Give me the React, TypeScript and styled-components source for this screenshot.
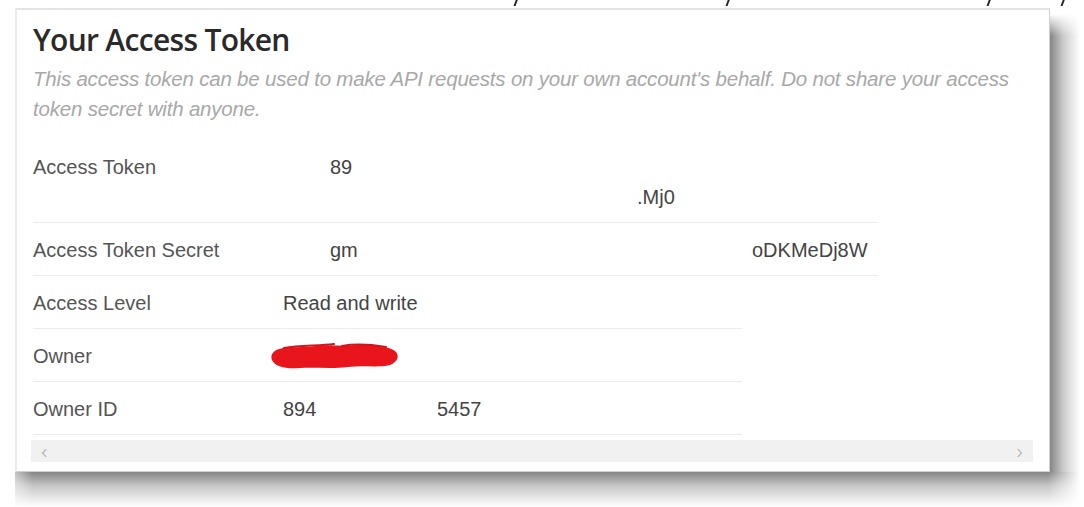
import { createGlobalStyle, styled } from 'styled-components'

type Row = {
  label: string
  values: { text?: string; at: number; redacted?: boolean }[][]
}

const firstRows: Row[] = [
  {
    label: 'Access Token',
    values: [[{ text: '89', at: 0 }], [{ text: '.Mj0', at: 307 }]],
  },
  {
    label: 'Access Token Secret',
    values: [[{ text: 'gm', at: 0 }, { text: 'oDKMeDj8W', at: 422 }]],
  },
]

const secondRows: Row[] = [
  { label: 'Access Level', values: [[{ text: 'Read and write', at: 0 }]] },
  { label: 'Owner', values: [[{ at: -13, redacted: true }]] },
  {
    label: 'Owner ID',
    values: [[{ text: '894', at: 0 }, { text: '5457', at: 154 }]],
  },
]

// descenders of the caption that sits above the cropped area
const ticks = [515, 727, 988, 1062]

const Redaction = () => (
  <svg width="130" height="27" viewBox="0 0 130 27">
    <path
      d="M9 6 C20 3 34 5 46 3 C60 1 72 4 86 2 C102 1 118 3 125 8 C130 12 128 19 120 22 C108 25 92 22 78 24 C62 26 44 24 30 25 C16 26 5 24 2 17 C0 12 3 8 9 6 Z"
      fill="#e8161c"
    />
    <path
      d="M14 5 C30 2 48 3 64 1 M72 3 C88 0 104 2 116 4"
      stroke="#d4141a"
      strokeWidth="2"
      strokeLinecap="round"
      fill="none"
    />
  </svg>
)

const App = () => {
  const renderRows = (rows: Row[]) =>
    rows.map((row) => (
      <TableRow key={row.label}>
        <Label>{row.label}</Label>
        <Value>
          {row.values.map((line, i) => (
            <ValueLine key={i}>
              {line.map((part, j) => (
                <Part key={j} $at={part.at}>
                  {part.redacted ? <Redaction /> : part.text}
                </Part>
              ))}
            </ValueLine>
          ))}
        </Value>
      </TableRow>
    ))

  return (
    <>
      <GlobalStyle />
      <TopStrip>
        {ticks.map((x) => (
          <Tick key={x} style={{ left: x }} />
        ))}
      </TopStrip>
      <CardFrame>
        <Card>
          <Title>Your Access Token</Title>
          <Description>
            This access token can be used to make API requests on your own account's behalf. Do not
            share your access token secret with anyone.
          </Description>
          <Table $width={845} $labelWidth={297}>
            {renderRows(firstRows)}
          </Table>
          <Table $width={709} $labelWidth={250}>
            {renderRows(secondRows)}
          </Table>
          <ScrollBar>
            <Arrow>‹</Arrow>
            <Arrow>›</Arrow>
          </ScrollBar>
        </Card>
      </CardFrame>
    </>
  )
}

const GlobalStyle = createGlobalStyle`
  body {
    margin: 0;
    background: #ffffff;
    font-family: "Liberation Sans", Arial, sans-serif;
  }
`

const TopStrip = styled.div`
  position: relative;
  height: 8px;
  overflow: hidden;
`

const Tick = styled.span`
  position: absolute;
  top: -2px;
  width: 2px;
  height: 8px;
  background: #222;
  transform: skewX(-20deg);
`

/* the screenshot tool's drop shadow, painted as two fading strips */
const CardFrame = styled.div`
  position: relative;
  margin-left: 15px;
  width: 1035px;
  padding: 0 32px 35px 0;

  &::before,
  &::after {
    content: '';
    position: absolute;
  }

  &::before {
    top: 6px;
    right: 2px;
    width: 30px;
    bottom: 35px;
    background: linear-gradient(to right, rgba(0, 0, 0, 0.48), rgba(0, 0, 0, 0.2) 45%, rgba(0, 0, 0, 0));
    -webkit-mask-image: linear-gradient(to bottom, transparent, #000 22px);
    mask-image: linear-gradient(to bottom, transparent, #000 22px);
  }

  &::after {
    left: 0;
    right: 2px;
    bottom: 0;
    height: 35px;
    background: linear-gradient(to bottom, rgba(0, 0, 0, 0.48), rgba(0, 0, 0, 0.22) 40%, rgba(0, 0, 0, 0));
    -webkit-mask-image: linear-gradient(to right, rgba(0, 0, 0, 0.5), #000 18px, #000 calc(100% - 32px), transparent);
    mask-image: linear-gradient(to right, rgba(0, 0, 0, 0.5), #000 18px, #000 calc(100% - 32px), transparent);
  }
`

const Card = styled.div`
  height: 464px;
  box-sizing: border-box;
  background: #fff;
  border-top: 2px solid #e4e4e4;
  border-left: 2px solid #ececec;
  border-right: 1px solid #d0d0d0;
  border-bottom: 1px solid #d0d0d0;
  padding: 12px 14px 0 16px;
  display: flex;
  flex-direction: column;
`

const Title = styled.h1`
  margin: 0;
  font-family: "Open Sans", sans-serif;
  font-weight: 600;
  font-size: 30px;
  line-height: 36px;
  color: #2a2a2a;
  letter-spacing: -0.7px;
`

const Description = styled.p`
  margin: 6px 0 0;
  font-style: italic;
  font-size: 20.5px;
  line-height: 30px;
  color: #a8a8a8;
  width: 985px;
  letter-spacing: -0.2px;
`

const Table = styled.div<{ $width: number; $labelWidth: number }>`
  width: ${(p) => p.$width}px;
  display: grid;
  grid-template-columns: ${(p) => p.$labelWidth}px 1fr;
  &:first-of-type {
    margin-top: 16px;
  }
`

const TableRow = styled.div`
  display: contents;
  & > * {
    padding: 12px 0 10px;
    border-bottom: 1px solid #ececec;
  }
  ${Table}:last-of-type &:last-child > * {
    border-bottom: none;
  }
`

const Label = styled.div`
  font-size: 20px;
  line-height: 30px;
  color: #555;
`

const Value = styled.div`
  font-size: 20px;
  line-height: 30px;
  color: #444;
`

const ValueLine = styled.div`
  display: grid;
  height: 30px;
  align-items: center;
`

const Part = styled.span<{ $at: number }>`
  grid-area: 1 / 1;
  margin-left: ${(p) => p.$at}px;
  display: inline-flex;
`

const ScrollBar = styled.div`
  margin: 5px 0 0 -2px;
  width: 1002px;
  height: 22px;
  background: #f1f1f1;
  display: flex;
  justify-content: space-between;
  align-items: center;
  padding: 0 10px;
  box-sizing: border-box;
  color: #bdbdbd;
  font-size: 20px;
`

const Arrow = styled.span`
  line-height: 1;
`

export default App
